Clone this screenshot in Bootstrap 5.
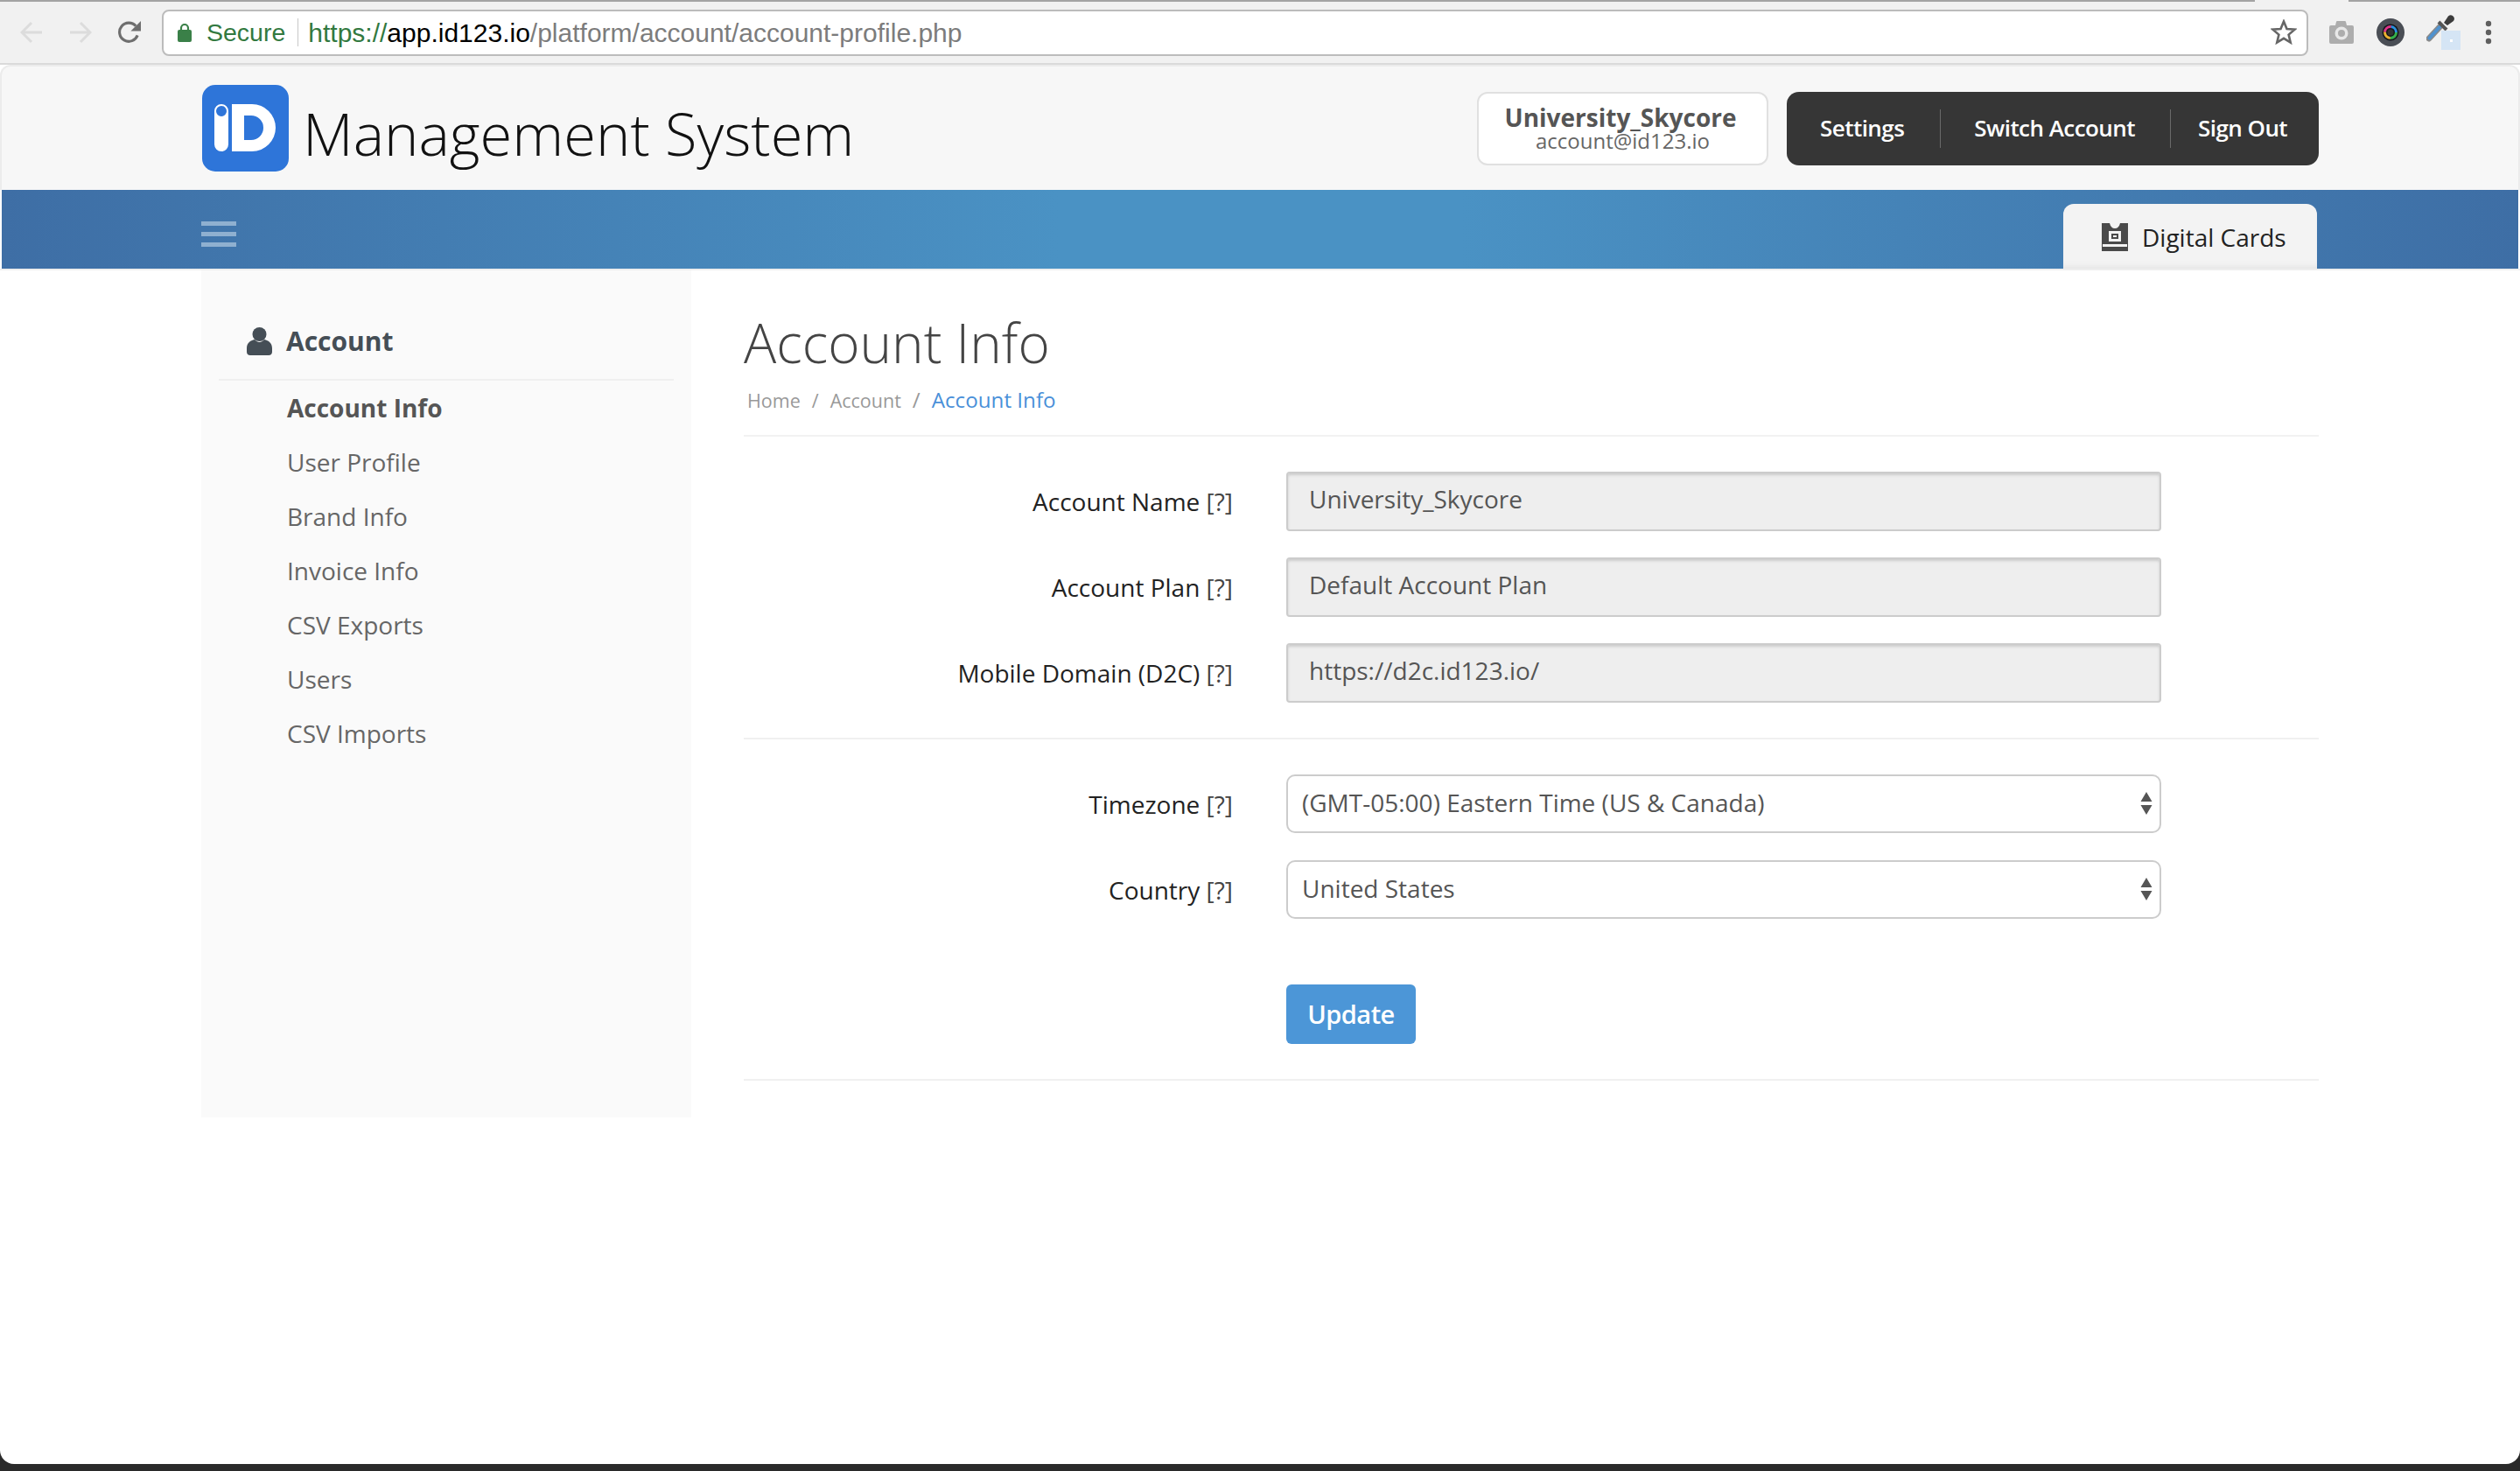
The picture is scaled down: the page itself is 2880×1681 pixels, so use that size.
<!DOCTYPE html>
<html lang="en">
<head>
<meta charset="utf-8">
<title>Account Info</title>
<link rel="stylesheet" href="https://cdn.jsdelivr.net/npm/bootstrap@5.3.0/dist/css/bootstrap.min.css">
<style>
html,body{height:100%;}
body{margin:0;background:#2a2a2a;font-family:"Open Sans",sans-serif;overflow:hidden;color:#333;}
.top-line{height:2px;background:linear-gradient(90deg,#a3a3a3 0,#a3a3a3 2577px,#f1f1f1 2577px,#f1f1f1 2684px,#a3a3a3 2684px);}
.chrome{height:72px;background:#f1f1f1;border-bottom:2px solid #dadada;padding-left:23px;}
.chrome-nav{width:26px;height:26px;flex:none;}
.fwd{margin-left:30px;}
.reload{margin-left:30px;margin-right:24px;}
.omni{width:2453px;height:53px;background:#fff;border:2px solid #bcbcbc;border-radius:8px;flex:none;font-family:"Liberation Sans",Arial,sans-serif;font-size:28.5px;padding-left:16px;padding-right:11px;}
.lock{width:16px;height:22px;margin-right:17px;}
.secure{color:#32793f;}
.omni-sep{width:1px;height:32px;background:#c8c8c8;margin:0 11px 0 14px;}
.url-all{font-size:30px;}
.url-s{color:#32793f;}
.url-h{color:#000;}
.url-p{color:#7c7c7c;}
.tool-cam{margin-left:24px;}
.tool-lens{margin-left:26px;}
.tool-drop{margin-left:25px;}
.tool-dots{margin-left:28px;}
.page{height:1599px;background:#fff;border-radius:0 0 16px 16px;overflow:hidden;}
.brandbar{height:143px;background:#f7f7f7;border:2px solid #ececec;border-bottom:0;border-radius:12px 12px 0 0;padding:0 228px 0 229px;}
.brand-logo{width:99px;height:99px;flex:none;}
.brand-name{font-weight:300;font-size:66.800px;color:#111;margin-left:16px;line-height:1;margin-top:14px;}
.acct-box{width:333px;height:84px;background:#fff;border:2px solid #e0e0e0;border-radius:12px;}
.acct-name{font-weight:700;font-size:28px;color:#555;line-height:27px;padding-right:5px;}
.acct-mail{font-size:24px;color:#666;line-height:25px;}
.acct-menu{width:608px;height:84px;background:#363636;border-radius:14px;margin-left:21px;padding-left:38px;}
.acct-menu a{color:#fff;font-size:26px;font-weight:600;text-decoration:none;white-space:nowrap;letter-spacing:-.55px;}
.menu-sep{width:1px;height:44px;background:#6a6a6a;margin:0 38px 0 41px;}
.menu-sep.b{margin:0 31px 0 40px;}
.bluebar{height:90px;background:linear-gradient(90deg,#3e6ea5 0,#4a92c4 42%,#4a92c4 58%,#3e6ea5 100%);padding:0 228px;margin:0 2px;align-items:flex-end;}
.burger{width:40px;align-self:center;display:flex;flex-direction:column;gap:7px;margin-top:10px;}
.burger span{height:5px;background:#8fb0d0;display:block;}
.cards-tab{width:290px;height:74px;background:#f3f3f3;border-radius:12px 12px 0 0;margin-right:2px;box-shadow:inset 0 -8px 10px -8px #ddd;font-size:28px;color:#222;padding:2px 0 0 44px;}
.cards-ico{width:30px;height:32px;margin-right:16px;}
.bar-under{height:2px;background:#eee;}
.shell{padding:0 230px;}
.side{width:560px;height:968px;background:#fafafa;flex:none;padding:0 20px;}
.side-head{height:126px;border-bottom:2px solid #f0f0f0;padding:37px 0 0 32px;font-weight:700;font-size:30px;color:#454e56;}
.side-head svg{width:29px;height:32px;margin-right:16px;}
.side .nav{padding:0;}
.side .nav-link{color:#666;font-size:28px;height:62px;line-height:62px;padding:0 0 0 78px;}
.side .nav-link.on{font-weight:700;color:#555;}
.main{width:1800px;margin-left:60px;}
.page-title{font-weight:300;font-size:62px;color:#444;margin:0;line-height:1;padding-top:51px;}
.crumbs{height:77px;border-bottom:2px solid #f2f2f2;padding:17px 0 0 4px;}
.crumbs .breadcrumb{margin:0;font-size:21.5px;align-items:baseline;--bs-breadcrumb-divider-color:#999;--bs-breadcrumb-item-padding-x:13px;}
.crumbs .breadcrumb-item a{color:#999;text-decoration:none;}
.crumbs .breadcrumb-item.active{color:#4a90d9;font-size:24.2px;}
.form-zone{padding-top:40px;}
.form-rowx{margin-bottom:30.5px;}
.fld-label{width:559px;margin:0 61px 0 0;text-align:right;font-size:28px;color:#222;padding:13px 0 0;}
.fld-label span{color:#444;}
.fld-in{width:1000px;}
.form-control.fld-ro{height:67.500px;background:#eee;border:2px solid #ccc;box-shadow:inset 0 2px 3px #ccc;border-radius:4px;font-size:28px;color:#555;padding:0 24px 5px;}
.form-select.fld-sel{height:67.500px;border:2px solid #ccc;border-radius:10px;font-size:28px;color:#555;padding:0 0 2px 16px;background-image:url("data:image/svg+xml,%3Csvg xmlns='http://www.w3.org/2000/svg' width='14' height='26'%3E%3Cpath fill='%23555' d='M7 0l6.500 11H.5zM7 26L.5 15h13z'/%3E%3C/svg%3E");background-size:14px 26px;background-position:right 8px center;}
.rule{border-top:2px solid #f0f0f0;margin:40px 0;height:0;}
.btn.btn-update{width:148px;height:68px;background:#4c96d7;border:0;border-radius:6px;font-size:29px;font-weight:600;color:#fff;padding:0;margin-left:620px;margin-top:74.500px;letter-spacing:-.5px;}
.rule.last{margin:40px 0 0;}
</style>
</head>
<body>
<div class="top-line"></div>
<div class="chrome d-flex align-items-center">
  <svg class="chrome-nav" viewBox="0 0 26 26"><path d="M25 13H3M13 2L2 13l11 11" fill="none" stroke="#dcdcdc" stroke-width="3"/></svg>
  <svg class="chrome-nav fwd" viewBox="0 0 26 26"><path d="M1 13h22M13 2l11 11-11 11" fill="none" stroke="#dcdcdc" stroke-width="3"/></svg>
  <svg class="chrome-nav reload" viewBox="0 0 27 27"><path d="M23 17a11 11 0 1 1-2-11" fill="none" stroke="#6e6e6e" stroke-width="3.200"/><path d="M27 0v12H15z" fill="#6e6e6e"/></svg>
  <div class="omni d-flex align-items-center">
    <svg class="lock" viewBox="0 0 16 22"><path d="M4 9V6a4 4 0 0 1 8 0v3" fill="none" stroke="#3a8048" stroke-width="2.200"/><rect y="8" width="16" height="14" rx="2" fill="#3a8048"/></svg>
    <span class="secure">Secure</span><span class="omni-sep"></span>
    <span class="text-nowrap url-all"><span class="url-s">https://</span><span class="url-h">app.id123.io</span><span class="url-p">/platform/account/account-profile.php</span></span>
    <svg class="ms-auto" width="30" height="30" viewBox="0 0 30 30"><path d="M15 2.500l3.500 8.500 9 .7-6.900 5.900 2.100 8.900L15 21.800l-7.700 4.700 2.100-8.900-6.900-5.900 9-.7z" fill="none" stroke="#666" stroke-width="2.600"/></svg>
  </div>
  <svg class="tool-cam" width="28" height="26" viewBox="0 0 28 26"><path d="M0 7a2 2 0 0 1 2-2h5l1-4a1.500 1.500 0 0 1 1-1h9a1.500 1.500 0 0 1 1 1l1 4h6a2 2 0 0 1 2 2v17a2 2 0 0 1-2 2H2a2 2 0 0 1-2-2z" fill="#adadad"/><circle cx="14" cy="14" r="7.500" fill="#e8e8e8"/><circle cx="14" cy="14" r="4" fill="#adadad"/></svg>
  <svg class="tool-lens" width="32" height="32" viewBox="0 0 32 32"><circle cx="16" cy="16" r="16" fill="#4a4e55"/><circle cx="16" cy="16" r="9.500" fill="#14161a"/><circle cx="16" cy="16" r="6.500" fill="none" stroke="#35b04a" stroke-width="3" stroke-dasharray="10.200 30.600"/><circle cx="16" cy="16" r="6.500" fill="none" stroke="#e0338a" stroke-width="3" stroke-dasharray="10.200 30.600" stroke-dashoffset="20.400"/><circle cx="16" cy="16" r="6.500" fill="none" stroke="#e8b030" stroke-width="3" stroke-dasharray="10.200 30.600" stroke-dashoffset="-10.200"/><circle cx="16" cy="16" r="6.500" fill="none" stroke="#2a90e0" stroke-width="3" stroke-dasharray="10.200 30.600" stroke-dashoffset="10.200"/><circle cx="16" cy="16" r="3.500" fill="#333"/></svg>
  <svg class="tool-drop" width="39" height="40" viewBox="0 0 39 40"><path d="M3 27L15 14" stroke="#8a8a8a" stroke-width="7" stroke-linecap="round"/><path d="M3.500 26.500L15 14" stroke="#4f92cf" stroke-width="4" stroke-linecap="round"/><path d="M14 8l9 9" stroke="#555" stroke-width="4"/><path d="M20 9L24 3a4 4 0 0 1 6-2 4 4 0 0 1 1 6l-7 5z" fill="#3c3c3c"/><rect x="17" y="18" width="22" height="22" fill="#d5e5f5"/><rect x="27" y="28" width="3" height="3" fill="#fff"/></svg>
  <svg class="tool-dots" width="8" height="28" viewBox="0 0 8 28"><circle cx="4" cy="4" r="3.200" fill="#5f5f5f"/><circle cx="4" cy="14" r="3.200" fill="#5f5f5f"/><circle cx="4" cy="24" r="3.200" fill="#5f5f5f"/></svg>
</div>

<div class="page">
  <header class="brandbar d-flex align-items-center">
    <svg class="brand-logo" viewBox="0 0 99 99" role="img" aria-label="iD logo"><rect width="99" height="99" rx="15" fill="#2e75d9"/><path fill="#fff" fill-rule="evenodd" d="M14 30a8 8 0 0 1 16 0v38a8 8 0 0 1-16 0zM22 24a6 6 0 1 0 0 12 6 6 0 0 0 0-12zM34 22H57A27 27 0 0 1 57 76H34zM48 35V63H56A14 14 0 0 0 56 35z"/></svg>
    <div class="brand-name">Management System</div>
    <div class="acct-box ms-auto text-center d-flex flex-column justify-content-center">
      <div class="acct-name">University_Skycore</div>
      <div class="acct-mail">account@id123.io</div>
    </div>
    <nav class="acct-menu d-flex align-items-center">
      <a href="#">Settings</a><span class="menu-sep"></span><a href="#">Switch Account</a><span class="menu-sep b"></span><a href="#">Sign Out</a>
    </nav>
  </header>
  <div class="bluebar d-flex justify-content-between">
    <div class="burger"><span></span><span></span><span></span></div>
    <div class="cards-tab d-flex align-items-center">
      <svg class="cards-ico" viewBox="0 0 30 32"><path fill="#4a4a4a" fill-rule="evenodd" d="M0 0h9c1 4 3 6 6 6s5-2 6-6h9v32H0zM8 9v12h14V9zM11 12h8v6h-8zM13 14v2h4v-2zM1 24v3h28v-3z"/></svg>
      <span>Digital Cards</span>
    </div>
  </div>
  <div class="bar-under"></div>
  <div class="shell d-flex">
    <aside class="side">
      <div class="side-head d-flex align-items-center">
        <svg viewBox="0 0 29 32"><circle cx="14.500" cy="8" r="8" fill="#454e56"/><path d="M0 24c0-6 4-9 9-10 2 2 3.500 3 5.500 3s3.500-1 5.500-3c5 1 9 4 9 10v4c0 2.500-1.500 4-4 4H4c-2.500 0-4-1.500-4-4z" fill="#454e56"/></svg>
        <span>Account</span>
      </div>
      <nav class="nav flex-column">
        <a class="nav-link on" href="#">Account Info</a>
        <a class="nav-link" href="#">User Profile</a>
        <a class="nav-link" href="#">Brand Info</a>
        <a class="nav-link" href="#">Invoice Info</a>
        <a class="nav-link" href="#">CSV Exports</a>
        <a class="nav-link" href="#">Users</a>
        <a class="nav-link" href="#">CSV Imports</a>
      </nav>
    </aside>
    <main class="main">
      <h1 class="page-title">Account Info</h1>
      <div class="crumbs">
        <ol class="breadcrumb">
          <li class="breadcrumb-item"><a href="#">Home</a></li>
          <li class="breadcrumb-item"><a href="#">Account</a></li>
          <li class="breadcrumb-item active">Account Info</li>
        </ol>
      </div>
      <form class="form-zone">
        <div class="d-flex form-rowx"><label class="fld-label">Account Name <span>[?]</span></label><div class="fld-in"><input class="form-control fld-ro" value="University_Skycore" readonly></div></div>
        <div class="d-flex form-rowx"><label class="fld-label">Account Plan <span>[?]</span></label><div class="fld-in"><input class="form-control fld-ro" value="Default Account Plan" readonly></div></div>
        <div class="d-flex"><label class="fld-label">Mobile Domain (D2C) <span>[?]</span></label><div class="fld-in"><input class="form-control fld-ro" value="https://d2c.id123.io/" readonly></div></div>
        <div class="rule"></div>
        <div class="d-flex form-rowx"><label class="fld-label">Timezone <span>[?]</span></label><div class="fld-in"><select class="form-select fld-sel"><option>(GMT-05:00) Eastern Time (US &amp; Canada)</option></select></div></div>
        <div class="d-flex"><label class="fld-label">Country <span>[?]</span></label><div class="fld-in"><select class="form-select fld-sel"><option>United States</option></select></div></div>
        <button type="button" class="btn btn-update d-block">Update</button>
        <div class="rule last"></div>
      </form>
    </main>
  </div>
</div>
<script src="https://cdn.jsdelivr.net/npm/bootstrap@5.3.0/dist/js/bootstrap.bundle.min.js"></script>
</body>
</html>
